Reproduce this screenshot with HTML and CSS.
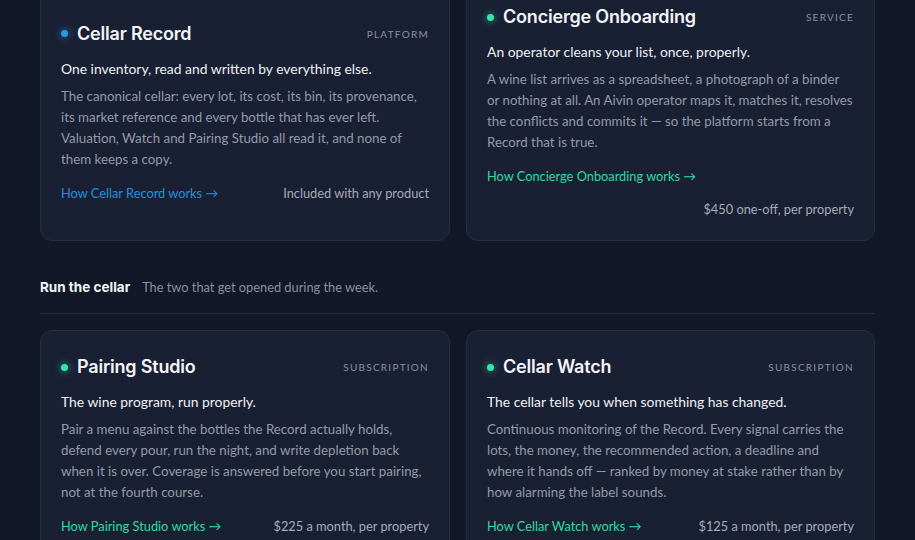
FILE: index.html
```html
<!DOCTYPE html>
<html lang="en">
<head>
<meta charset="utf-8">
<title>Products</title>
<link rel="stylesheet" href="styles.css">
</head>
<body>
<main class="page">
  <section class="grid">
    <article class="card card--center">
      <header class="card-head">
        <h3 class="card-title"><span class="dot dot--blue"></span>Cellar Record</h3>
        <span class="kicker">Platform</span>
      </header>
      <p class="lede">One inventory, read and written by everything else.</p>
      <p class="body">The canonical cellar: every lot, its cost, its bin, its provenance, its market reference and every bottle that has ever left. Valuation, Watch and Pairing Studio all read it, and none of them keeps a copy.</p>
      <footer class="card-foot">
        <a class="link link--blue" href="#">How Cellar Record works →</a>
        <span class="price">Included with any product</span>
      </footer>
    </article>
    <article class="card">
      <header class="card-head">
        <h3 class="card-title"><span class="dot dot--green"></span>Concierge Onboarding</h3>
        <span class="kicker">Service</span>
      </header>
      <p class="lede">An operator cleans your list, once, properly.</p>
      <p class="body">A wine list arrives as a spreadsheet, a photograph of a binder or nothing at all. An Aivin operator maps it, matches it, resolves the conflicts and commits it — so the platform starts from a Record that is true.</p>
      <footer class="card-foot">
        <a class="link link--green" href="#">How Concierge Onboarding works →</a>
        <span class="price">$450 one-off, per property</span>
      </footer>
    </article>
  </section>

  <div class="section-head">
    <h2 class="section-title">Run the cellar</h2>
    <p class="section-sub">The two that get opened during the week.</p>
  </div>

  <section class="grid">
    <article class="card">
      <header class="card-head">
        <h3 class="card-title"><span class="dot dot--green"></span>Pairing Studio</h3>
        <span class="kicker">Subscription</span>
      </header>
      <p class="lede">The wine program, run properly.</p>
      <p class="body">Pair a menu against the bottles the Record actually holds, defend every pour, run the night, and write depletion back when it is over. Coverage is answered before you start pairing, not at the fourth course.</p>
      <footer class="card-foot">
        <a class="link link--green" href="#">How Pairing Studio works →</a>
        <span class="price">$225 a month, per property</span>
      </footer>
    </article>
    <article class="card">
      <header class="card-head">
        <h3 class="card-title"><span class="dot dot--green"></span>Cellar Watch</h3>
        <span class="kicker">Subscription</span>
      </header>
      <p class="lede">The cellar tells you when something has changed.</p>
      <p class="body">Continuous monitoring of the Record. Every signal carries the lots, the money, the recommended action, a deadline and where it hands off — ranked by money at stake rather than by how alarming the label sounds.</p>
      <footer class="card-foot">
        <a class="link link--green" href="#">How Cellar Watch works →</a>
        <span class="price">$125 a month, per property</span>
      </footer>
    </article>
  </section>
</main>
</body>
</html>
```

FILE: styles.css
```css
* { box-sizing: border-box; }
html, body {
  margin: 0;
  padding: 0;
  background: #121828;
  height: 100%;
  overflow: hidden;
}
body {
  font-family: "Lato", "Inter", sans-serif;
  color: #e9ecf2;
}
.page {
  width: 835px;
  margin: -20px 0 0 40px;
}
.grid {
  display: grid;
  grid-template-columns: 410px 409px;
  column-gap: 16px;
}
.card {
  background: #1a2033;
  border: 1px solid #272e42;
  border-radius: 12px;
  padding: 23px 20px 21px;
  display: flex;
  flex-direction: column;
}
.card--center { justify-content: center; }
.card-head {
  display: flex;
  justify-content: space-between;
  align-items: center;
  height: 26px;
}
.card-title {
  margin: 0;
  font-family: "Inter", "Lato", sans-serif;
  font-size: 18px;
  font-weight: 600;
  letter-spacing: -0.2px;
  line-height: 26px;
  color: #f3f5f9;
  display: flex;
  align-items: center;
}
.dot {
  width: 7px;
  height: 7px;
  border-radius: 50%;
  margin: 0 9px 0 0;
  flex: none;
}
.dot--blue { background: #2a97e0; box-shadow: 0 0 6px 2px rgba(42,151,224,0.35); }
.dot--green { background: #33e6ab; box-shadow: 0 0 6px 2px rgba(51,230,171,0.3); }
.kicker {
  font-size: 10px;
  letter-spacing: 1.25px;
  text-transform: uppercase;
  color: #8a90a0;
}
.lede {
  margin: 12px 0 7px;
  font-size: 13.9px;
  line-height: 20px;
  color: #eef0f5;
}
.body {
  margin: 0;
  font-size: 13.3px;
  line-height: 21px;
  color: #949aa8;
}
.card-foot {
  margin-top: 13px;
  display: flex;
  flex-wrap: wrap;
  justify-content: space-between;
  align-items: baseline;
  column-gap: 16px;
  row-gap: 13px;
  font-size: 12.8px;
  line-height: 20px;
}
.link { text-decoration: none; }
.link--blue { color: #2290d8; }
.link--green { color: #2fdba3; }
.price { color: #a6abb8; margin-left: auto; }
.section-head {
  margin-top: 35px;
  padding-bottom: 15px;
  border-bottom: 1px solid #232a3c;
  margin-bottom: 16px;
  display: flex;
  align-items: baseline;
  gap: 12px;
}
.section-title {
  margin: 0;
  font-family: "Inter", "Lato", sans-serif;
  font-size: 13.5px;
  font-weight: 700;
  line-height: 22px;
  color: #f3f5f9;
}
.section-sub {
  margin: 0;
  font-size: 12.8px;
  color: #8a90a0;
}
```
